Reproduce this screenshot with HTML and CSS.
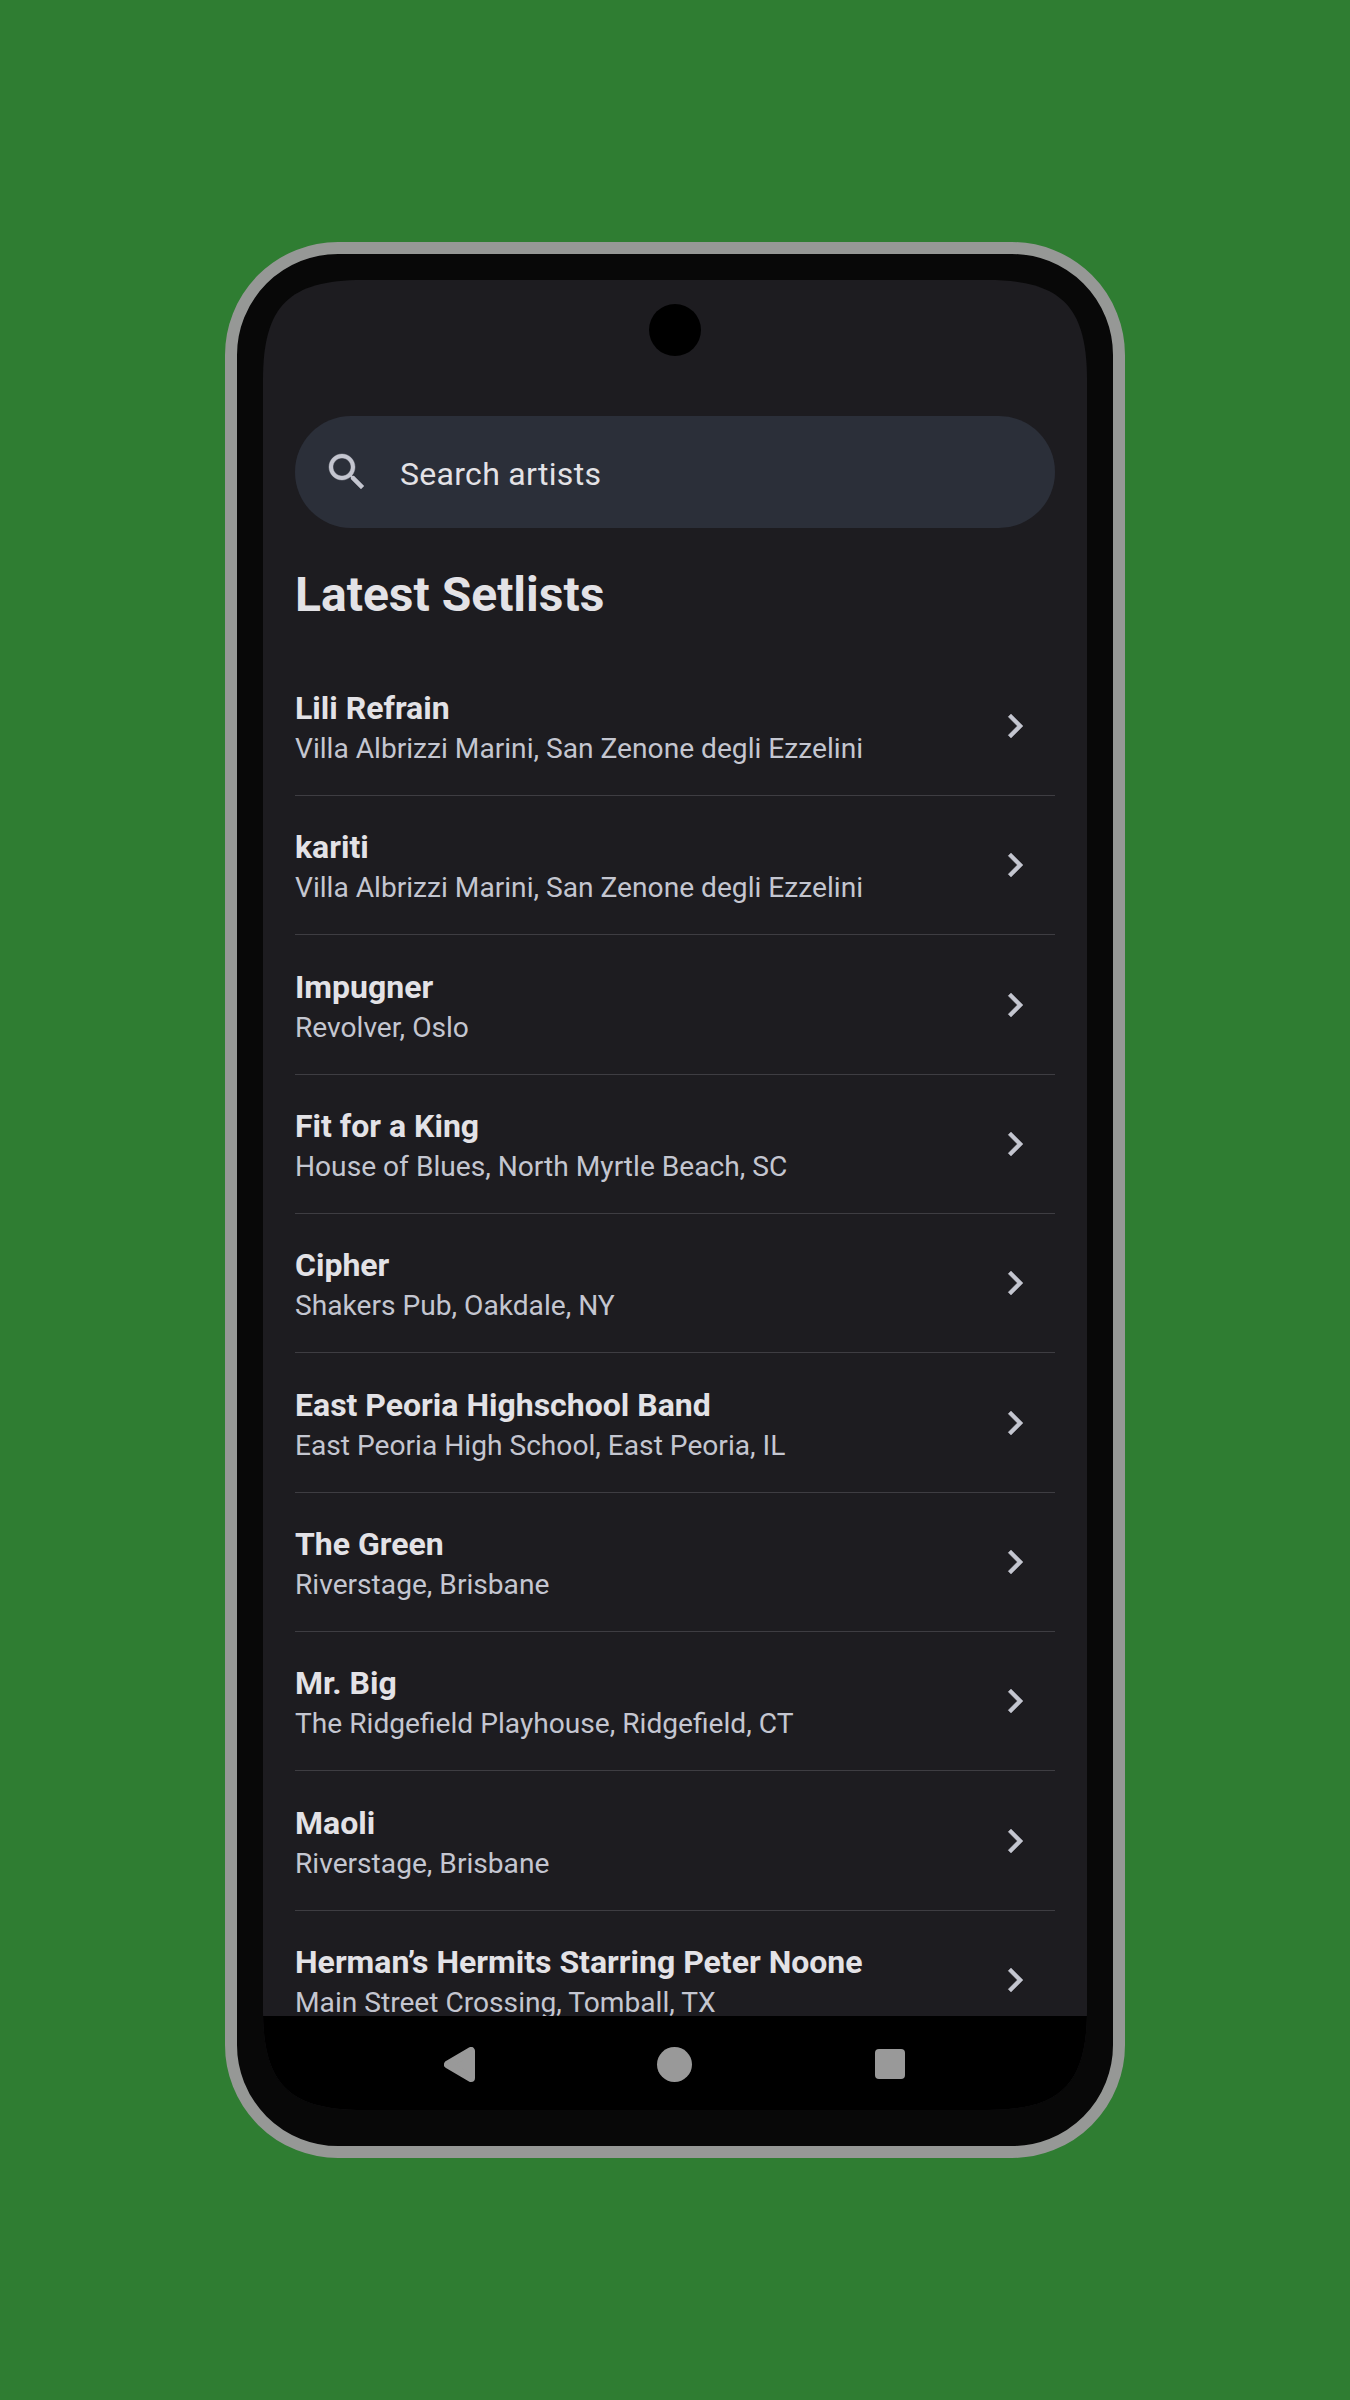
FILE: index.html
```html
<!DOCTYPE html>
<html lang="en">
<head>
<meta charset="utf-8">
<title>Latest Setlists</title>
<link rel="stylesheet" href="styles.css">
</head>
<body>
<svg width="0" height="0" class="defs"><symbol id="chevron" viewBox="0 0 24 24"><path d="M10 6 8.59 7.41 13.17 12l-4.58 4.59L10 18l6-6z"/></symbol></svg>
<div class="phone">
  <div class="screen">
    <header class="status"><span class="camera"></span></header>
    <main class="content">
      <div class="search">
        <svg class="icon" viewBox="0 0 24 24"><path d="M15.5 14h-.79l-.28-.27C15.41 12.59 16 11.11 16 9.5 16 5.91 13.09 3 9.5 3S3 5.91 3 9.5 5.91 16 9.5 16c1.61 0 3.09-.59 4.23-1.57l.27.28v.79l5 4.99L20.49 19l-4.99-5zm-6 0C7.01 14 5 11.99 5 9.5S7.01 5 9.5 5 14 7.01 14 9.5 11.99 14 9.5 14z"/></svg>
        <span class="placeholder">Search artists</span>
      </div>
      <h1 class="title">Latest Setlists</h1>
      <ul class="list">
        <li class="row"><div class="text"><h2 class="name">Lili Refrain</h2><p class="venue">Villa Albrizzi Marini, San Zenone degli Ezzelini</p></div><svg class="icon"><use href="#chevron"/></svg></li>
        <li class="row"><div class="text"><h2 class="name">kariti</h2><p class="venue">Villa Albrizzi Marini, San Zenone degli Ezzelini</p></div><svg class="icon"><use href="#chevron"/></svg></li>
        <li class="row"><div class="text"><h2 class="name">Impugner</h2><p class="venue">Revolver, Oslo</p></div><svg class="icon"><use href="#chevron"/></svg></li>
        <li class="row"><div class="text"><h2 class="name">Fit for a King</h2><p class="venue">House of Blues, North Myrtle Beach, SC</p></div><svg class="icon"><use href="#chevron"/></svg></li>
        <li class="row"><div class="text"><h2 class="name">Cipher</h2><p class="venue">Shakers Pub, Oakdale, NY</p></div><svg class="icon"><use href="#chevron"/></svg></li>
        <li class="row"><div class="text"><h2 class="name">East Peoria Highschool Band</h2><p class="venue">East Peoria High School, East Peoria, IL</p></div><svg class="icon"><use href="#chevron"/></svg></li>
        <li class="row"><div class="text"><h2 class="name">The Green</h2><p class="venue">Riverstage, Brisbane</p></div><svg class="icon"><use href="#chevron"/></svg></li>
        <li class="row"><div class="text"><h2 class="name">Mr. Big</h2><p class="venue">The Ridgefield Playhouse, Ridgefield, CT</p></div><svg class="icon"><use href="#chevron"/></svg></li>
        <li class="row"><div class="text"><h2 class="name">Maoli</h2><p class="venue">Riverstage, Brisbane</p></div><svg class="icon"><use href="#chevron"/></svg></li>
        <li class="row"><div class="text"><h2 class="name">Herman’s Hermits Starring Peter Noone</h2><p class="venue">Main Street Crossing, Tomball, TX</p></div><svg class="icon"><use href="#chevron"/></svg></li>
      </ul>
    </main>
    <nav class="navbar">
      <svg class="back" viewBox="0 0 31 35"><path d="M4 17.5 27 4V31z"/></svg>
      <span class="home"></span>
      <span class="recents"></span>
    </nav>
  </div>
</div>
</body>
</html>
```
FILE: styles.css
```css
* { box-sizing: border-box; margin: 0; padding: 0; }

body {
  height: 2400px;
  overflow: hidden;
  display: flex;
  justify-content: center;
  align-items: center;
  background: #2f7d32;
  font-family: Roboto, sans-serif;
  color: #e3e2e6;
}

.defs { display: none; }

.phone {
  width: 900px;
  height: 1916px;
  padding: 26px 26px 36px;
  border: 12px solid #969896;
  border-radius: 113px;
  background: #080808;
}

.screen {
  display: flex;
  flex-direction: column;
  width: 824px;
  height: 1830px;
  background: #1d1c20;
  clip-path: path("M0 100C0 26 26 0 100 0H724C798 0 824 26 824 100V1730C824 1804 798 1830 724 1830H100C26 1830 0 1804 0 1730Z");
}

.status {
  flex: none;
  height: 136px;
  padding-top: 24px;
  display: flex;
  justify-content: center;
}

.camera {
  width: 52px;
  height: 52px;
  border-radius: 50%;
  background: #000;
}

.content {
  flex: 1;
  min-height: 0;
  overflow: hidden;
  padding: 0 32px;
}

.search {
  display: flex;
  align-items: center;
  gap: 29px;
  height: 112px;
  padding-left: 28px;
  border-radius: 56px;
  background: #2b2f39;
}

.icon {
  flex: none;
  width: 48px;
  height: 48px;
  fill: #c4c6d0;
  stroke: #c4c6d0;
  stroke-width: 0.2px;
}

.placeholder {
  padding-top: 4px;
  font-size: 32px;
  line-height: 48px;
  letter-spacing: 0.3px;
}

.title {
  margin-top: 35px;
  font-size: 48px;
  line-height: 64px;
  font-weight: 700;
}

.list { list-style: none; margin-top: 29.8px; }

.row {
  display: flex;
  justify-content: space-between;
  align-items: center;
  height: 139.33px;
  padding-right: 16px;
  border-bottom: 1px solid #3e3d42;
}

.text { padding-top: 4px; }

.name {
  font-size: 32px;
  line-height: 42px;
  font-weight: 700;
}

.venue {
  font-size: 28.15px;
  line-height: 40px;
  color: #c4c6d0;
  white-space: nowrap;
}

.navbar {
  flex: none;
  display: flex;
  justify-content: space-between;
  align-items: center;
  height: 94px;
  padding: 2px 182px 0 181px;
  background: #000;
}

.back {
  width: 31px;
  height: 35px;
  fill: #999;
  stroke: #999;
  stroke-width: 8px;
  stroke-linejoin: round;
}

.home {
  width: 35px;
  height: 35px;
  margin-left: -1px;
  border-radius: 50%;
  background: #999;
}

.recents {
  width: 30px;
  height: 30px;
  border-radius: 4px;
  background: #999;
}
```
